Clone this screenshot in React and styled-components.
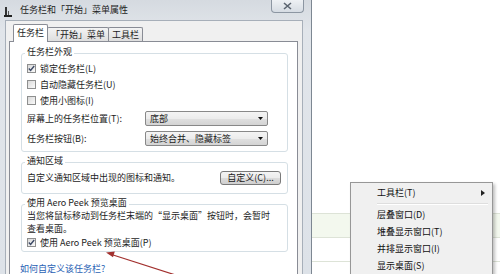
import React from "react";
import styled, { createGlobalStyle } from "styled-components";

const GlobalStyle = createGlobalStyle`
  html, body {
    margin: 0;
    padding: 0;
    background: #fff;
  }
  body {
    font-family: "Noto Sans CJK SC", sans-serif;
    overflow: hidden;
  }
`;

const Page = styled.div`
  position: relative;
  display: flex;
  width: 500px;
  height: 274px;
  overflow: hidden;
  background: #fff;
  font-size: 9px;
  color: #1c1c1c;
`;

// Dialog window
const Window = styled.div`
  display: flex;
  flex-direction: column;
  flex: none;
  width: 311px;
  background: linear-gradient(#d5dae0, #e1e5ea 30px, #dde2e8);
  border-right: 1px solid #7d8792;
`;

const TitleBar = styled.div`
  display: flex;
  align-items: flex-start;
  height: 21px;
  padding-left: 4px;
`;

const AppIcon = styled.svg`
  margin-top: 7px;
  flex: none;
`;

const Title = styled.div`
  margin-left: 8px;
  line-height: 20px;
  color: #222;
`;

const CloseButton = styled.div`
  margin-left: auto;
  margin-right: 7px;
  width: 33px;
  height: 13px;
  box-sizing: border-box;
  display: flex;
  align-items: center;
  justify-content: center;
  border: 1px solid #8c96a2;
  border-top: none;
  border-radius: 0 0 4px 4px;
  background: linear-gradient(#eef1f4, #d6dce3);
`;

const Client = styled.div`
  flex: 1;
  display: flex;
  flex-direction: column;
  margin: 0 8px 0 5px;
  padding: 3px 4px 0 3px;
  background: #f0f0f0;
  border: 1px solid #a7afb9;
  border-bottom: none;
`;

const Tabs = styled.div`
  display: flex;
  align-items: flex-end;
  height: 17px;
  padding-left: 4px;
`;

const Tab = styled.div`
  position: relative;
  height: ${(p) => (p.$active ? 18 : 14)}px;
  margin-right: -1px;
  margin-bottom: ${(p) => (p.$active ? -1 : 0)}px;
  padding: 0 3px;
  box-sizing: border-box;
  line-height: ${(p) => (p.$active ? 16 : 13)}px;
  border: 1px solid #898c95;
  border-bottom: none;
  border-radius: 2px 2px 0 0;
  background: ${(p) =>
    p.$active ? "#fff" : "linear-gradient(#f4f4f4, #e9e9e9 50%, #dedede)"};
  z-index: ${(p) => (p.$active ? 1 : 0)};
`;

const Panel = styled.div`
  flex: 1;
  display: flex;
  flex-direction: column;
  align-items: flex-start;
  padding: 4px 9px 0 11px;
  background: #fff;
  border: 1px solid #898c95;
  border-bottom: none;
`;

const Group = styled.fieldset`
  align-self: stretch;
  margin: ${(p) => (p.$first ? 0 : 3)}px 0 0;
  padding: 0 6px ${(p) => p.$padBottom}px 5px;
  min-width: 0;
  border: 1px solid #d5dfe5;
  border-radius: 3px;
`;

const Legend = styled.legend`
  margin-left: -2px;
  padding: 0 2px 3px;
  line-height: 11px;
`;

const CheckRow = styled.label`
  display: flex;
  align-items: center;
  gap: 4px;
  height: ${(p) => p.$h || 16}px;
`;

const Box = styled.span`
  flex: none;
  display: flex;
  align-items: center;
  justify-content: center;
  width: 9px;
  height: 9px;
  box-sizing: border-box;
  border: 1px solid #8e8f8f;
  background: linear-gradient(135deg, #d9d9d9, #fafafa);
`;

const FieldRow = styled.div`
  display: grid;
  grid-template-columns: 118px 123px;
  align-items: center;
  height: 20px;
`;

const Select = styled.div`
  display: flex;
  align-items: center;
  justify-content: space-between;
  height: 15px;
  box-sizing: border-box;
  padding: 0 4px;
  border: 1px solid #888;
  border-radius: 2px;
  background: linear-gradient(#f4f4f4, #ececec 50%, #e0e0e0 50%, #d4d4d4);
`;

const NotifyRow = styled.div`
  display: flex;
  align-items: center;
  justify-content: space-between;
  height: 17px;
`;

const Button = styled.div`
  width: 61px;
  height: 14px;
  box-sizing: border-box;
  display: flex;
  align-items: center;
  justify-content: center;
  border: 1px solid #7a7a7a;
  border-radius: 3px;
  background: linear-gradient(#f4f4f4, #ececec 50%, #dcdcdc 50%, #cfcfcf);
`;

const Desc = styled.div`
  margin-top: -2px;
  line-height: 13px;
`;

const Link = styled.div`
  margin: 11px 0 0 -1px;
  line-height: 11px;
  color: #2a62b4;
`;

// Background page with the context menu
const Desktop = styled.div`
  position: relative;
  flex: 1;
  padding-top: 213px;
`;

const BgRow = styled.div`
  height: 23px;
  border-top: 1px solid #dde3d7;
  background: ${(p) => (p.$tint ? "#f3f8ee" : "#fff")};
`;

const Menu = styled.div`
  position: absolute;
  left: 38px;
  top: 182px;
  bottom: -10px;
  width: 143px;
  box-sizing: border-box;
  padding: 1px 2px;
  background: #f0f0f0;
  border: 1px solid #979797;
  box-shadow: 2px 2px 3px rgba(0, 0, 0, 0.25);
`;

const MenuItem = styled.div`
  display: flex;
  align-items: center;
  justify-content: space-between;
  height: 17px;
  padding: 0 5px 0 24px;
  color: #111;
`;

const MenuSeparator = styled.div`
  height: 1px;
  margin: 2px 2px 1px 24px;
  background: #dedede;
  border-bottom: 1px solid #fff;
`;

const Annotation = styled.svg`
  position: absolute;
  left: 0;
  top: 0;
  pointer-events: none;
`;

const Check = () => (
  <svg width="7" height="7" viewBox="0 0 7 7">
    <path d="M0.8 3.6 L2.6 5.5 L6.2 1" fill="none" stroke="#3d4a66" strokeWidth="1.4" />
  </svg>
);

const Checkbox = ({ checked, children, h }) => (
  <CheckRow $h={h}>
    <Box>{checked && <Check />}</Box>
    <span>{children}</span>
  </CheckRow>
);

const DropArrow = () => (
  <svg width="5" height="3" viewBox="0 0 5 3">
    <path d="M0 0 H5 L2.5 3 Z" fill="#111" />
  </svg>
);

const menuItems = ["层叠窗口(D)", "堆叠显示窗口(T)", "并排显示窗口(I)", "显示桌面(S)"];

export default function App() {
  return (
    <>
      <GlobalStyle />
      <Page>
        <Window>
          <TitleBar>
            <AppIcon width="8" height="10" viewBox="0 0 8 10">
              <rect x="1" y="0" width="2" height="8" fill="#333" />
              <rect x="4" y="4" width="1" height="4" fill="#555" />
              <rect x="0" y="8" width="8" height="2" fill="#222" />
            </AppIcon>
            <Title>任务栏和「开始」菜单属性</Title>
            <CloseButton>
              <svg width="9" height="8" viewBox="0 0 9 8">
                <path d="M1 1 L8 7 M8 1 L1 7" stroke="#5b6470" strokeWidth="1.6" />
              </svg>
            </CloseButton>
          </TitleBar>
          <Client>
            <Tabs>
              <Tab $active>任务栏</Tab>
              <Tab>「开始」菜单</Tab>
              <Tab>工具栏</Tab>
            </Tabs>
            <Panel>
              <Group $first $padBottom={3}>
                <Legend>任务栏外观</Legend>
                <Checkbox checked>锁定任务栏(L)</Checkbox>
                <Checkbox>自动隐藏任务栏(U)</Checkbox>
                <Checkbox>使用小图标(I)</Checkbox>
                <FieldRow>
                  <span>屏幕上的任务栏位置(T):</span>
                  <Select>
                    <span>底部</span>
                    <DropArrow />
                  </Select>
                </FieldRow>
                <FieldRow>
                  <span>任务栏按钮(B):</span>
                  <Select>
                    <span>始终合并、隐藏标签</span>
                    <DropArrow />
                  </Select>
                </FieldRow>
              </Group>
              <Group $padBottom={7}>
                <Legend>通知区域</Legend>
                <NotifyRow>
                  <span>自定义通知区域中出现的图标和通知。</span>
                  <Button>自定义(C)...</Button>
                </NotifyRow>
              </Group>
              <Group $padBottom={1}>
                <Legend>使用 Aero Peek 预览桌面</Legend>
                <Desc>
                  当您将鼠标移动到任务栏末端的“显示桌面”按钮时，会暂时
                  <br />
                  查看桌面。
                </Desc>
                <Checkbox checked h={15}>
                  使用 Aero Peek 预览桌面(P)
                </Checkbox>
              </Group>
              <Link>如何自定义该任务栏?</Link>
            </Panel>
          </Client>
        </Window>
        <Desktop>
          <BgRow $tint />
          <BgRow />
          <BgRow />
          <Menu>
            <MenuItem>
              <span>工具栏(T)</span>
              <svg width="4" height="6" viewBox="0 0 4 6">
                <path d="M0 0 L4 3 L0 6 Z" fill="#222" />
              </svg>
            </MenuItem>
            <MenuSeparator />
            {menuItems.map((label) => (
              <MenuItem key={label}>{label}</MenuItem>
            ))}
          </Menu>
        </Desktop>
        <Annotation width="500" height="274" viewBox="0 0 500 274">
          <path d="M188 279 L110 254" stroke="#a2302e" strokeWidth="1.2" fill="none" />
          <path d="M106 252.5 L114.8 251.6 L113 257.2 Z" fill="#a2302e" />
        </Annotation>
      </Page>
    </>
  );
}
